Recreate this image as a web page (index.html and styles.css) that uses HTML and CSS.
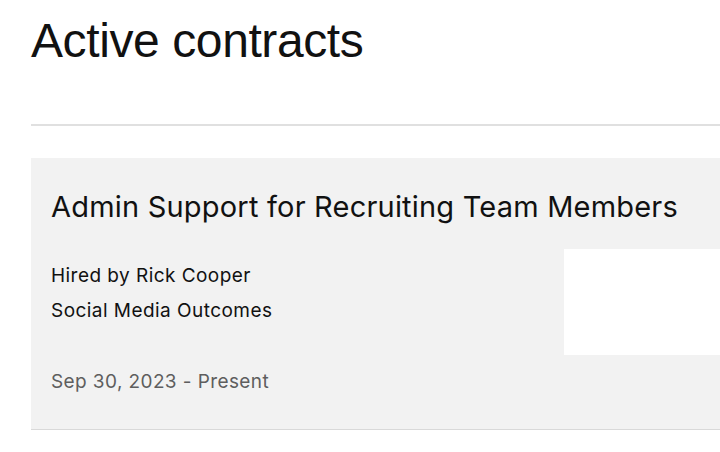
FILE: index.html
```html
<!DOCTYPE html>
<html>
<head>
<meta charset="utf-8">
<link rel="stylesheet" href="styles.css">
</head>
<body>
<main class="page">
  <h1 class="page-title">Active contracts</h1>
  <hr class="divider">
  <section class="card">
    <h2 class="card-title">Admin Support for Recruiting Team Members</h2>
    <div class="card-body">
      <div class="card-info">
        <p class="hired">Hired by Rick Cooper</p>
        <p class="company">Social Media Outcomes</p>
      </div>
      <div class="card-aside"></div>
    </div>
    <p class="dates">Sep 30, 2023 - Present</p>
  </section>
</main>
</body>
</html>
```
FILE: styles.css
```css
html, body {
  margin: 0;
  padding: 0;
  background: #ffffff;
  font-family: "Liberation Sans", Arial, sans-serif;
  color: #111;
  overflow: hidden;
}
.page {
  padding-left: 31px;
}
.page-title {
  margin: 0;
  padding-top: 13px;
  font-size: 48px;
  font-weight: 400;
  line-height: 56px;
  letter-spacing: -0.4px;
}
.divider {
  margin: 55px 0 0 0;
  border: 0;
  height: 2px;
  background: #e0e0e0;
}
.card {
  margin-top: 32px;
  background: #f2f2f2;
  border-bottom: 1px solid #d9d9d9;
  padding: 30px 0 35px 20px;
  font-family: Inter, "Liberation Sans", sans-serif;
}
.card-title {
  margin: 0;
  font-size: 29px;
  font-weight: 400;
  line-height: 38px;
  letter-spacing: 0.2px;
}
.card-body {
  display: flex;
  justify-content: space-between;
  margin-top: 23px;
}
.card-info {
  padding-top: 15px;
}
.hired, .company {
  margin: 0;
  font-size: 19px;
  line-height: 24px;
  letter-spacing: 0.45px;
}
.company {
  margin-top: 11px;
}
.card-aside {
  width: 156px;
  height: 106px;
  background: #ffffff;
}
.dates {
  margin: 15px 0 0 0;
  font-size: 19px;
  line-height: 24px;
  color: #5e5e5e;
  letter-spacing: 0.4px;
}
```
